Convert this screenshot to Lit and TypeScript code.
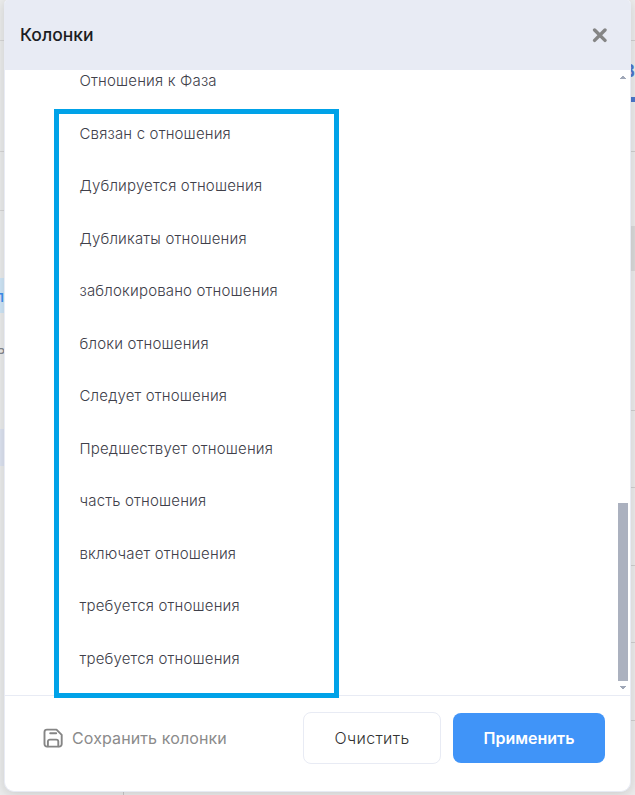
import { LitElement, html, css, svg } from "lit";
import { customElement } from "lit/decorators.js";

const COLUMNS = [
  "Связан с отношения",
  "Дублируется отношения",
  "Дубликаты отношения",
  "заблокировано отношения",
  "блоки отношения",
  "Следует отношения",
  "Предшествует отношения",
  "часть отношения",
  "включает отношения",
  "требуется отношения",
  "требуется отношения",
];

const LEFT_LINES = [40, 151, 210];
const RIGHT_LINES = [40, 151, 410, 487, 565, 642, 720];

/** The dimmed page that shows around the dialog. */
@customElement("page-backdrop")
export class PageBackdrop extends LitElement {
  static styles = css`
    :host {
      position: absolute;
      inset: 0;
      overflow: hidden;
      background: #ececec;
      font-family: Inter, sans-serif;
    }
    svg { display: block; }
    text { font-size: 15px; }
  `;
  render() {
    return html`<svg width="635" height="795" viewBox="0 0 635 795">
      <rect width="124" height="795" fill="#ebecec" />
      <rect x="123" y="790" width="1" height="5" fill="#c8c8c8" />
      ${LEFT_LINES.map((y) => svg`<rect y=${y} width="5" height="1" fill="#d6d6d6" />`)}
      ${RIGHT_LINES.map((y) => svg`<rect x="625" y=${y} width="10" height="1" fill="#cfcfcf" />`)}
      <rect y="278" width="5" height="35" fill="#cfe6f7" />
      <rect y="429" width="5" height="37" fill="#dde3f1" />
      <rect x="625" y="226" width="10" height="45" fill="#dadada" />
      <rect x="625" y="97" width="10" height="5" fill="#4c78cc" />
      <text x="4" y="302" text-anchor="end" fill="#3e8ef0" font-weight="500">л</text>
      <text x="5.2" y="354" text-anchor="end" fill="#85888f">ь</text>
      <text class="tab" x="634.8" y="77" text-anchor="end" fill="#4c78cc" font-weight="700" style="font-size:17px">В</text>
    </svg>`;
  }
}

@customElement("app-root")
export class AppRoot extends LitElement {
  static styles = css`
    :host {
      display: block;
      position: relative;
      width: 635px;
      height: 795px;
      overflow: hidden;
      font-family: Inter, "Noto Sans", sans-serif;
    }
    .dialog {
      position: relative;
      box-sizing: border-box;
      width: 627px;
      height: 792px;
      margin-left: 4px;
      display: flex;
      flex-direction: column;
      background: #fff;
      border: 1px solid #e8ebf4;
      border-top: 0;
      border-radius: 4px 4px 10px 10px;
      box-shadow: 0 2px 12px rgba(0, 0, 0, 0.14);
      overflow: hidden;
    }
    .header {
      flex: none;
      box-sizing: border-box;
      height: 70px;
      padding: 0 23px 0 15px;
      display: flex;
      align-items: center;
      justify-content: space-between;
      background: #e8ebf4;
    }
    h1 {
      margin: 0;
      font-size: 17.5px;
      line-height: 24px;
      font-weight: 500;
      color: #1b1d22;
    }
    .header svg, .save svg { display: block; flex: none; }
    .body {
      flex: none;
      box-sizing: border-box;
      height: 625px;
      display: flex;
      justify-content: space-between;
      overflow: hidden;
    }
    ul {
      margin: -15px 0 0 74.5px;
      padding: 0;
      list-style: none;
    }
    li {
      height: 52.5px;
      line-height: 52.5px;
      font-size: 15px;
      font-weight: 300;
      letter-spacing: 0.17px;
      color: #40404a;
      white-space: nowrap;
    }
    .scrollbar {
      width: 10px;
      margin-right: 2px;
      padding: 6px 0 5px;
      display: flex;
      flex-direction: column;
      align-items: center;
    }
    .thumb {
      width: 10px;
      height: 178px;
      margin: auto 0 5px;
      background: #abb1bf;
    }
    .scrollbar svg { display: block; }
    .scrollbar .down { margin-bottom: 1px; }
    .footer {
      flex: 1;
      display: flex;
      align-items: flex-start;
      border-top: 1px solid #e8ebf4;
      padding: 16px 25px 0 38px;
    }
    .save {
      display: flex;
      align-items: center;
      gap: 9px;
      height: 52px;
      margin-right: auto;
      color: #8b8b8b;
      font-size: 16px;
      letter-spacing: 0.11px;
      white-space: nowrap;
    }
    button {
      box-sizing: border-box;
      padding: 0;
      font: 400 16px/20px Inter, sans-serif;
      border-radius: 8px;
    }
    .clear {
      width: 138px;
      height: 52px;
      border: 1px solid #e8ebf4;
      background: #fff;
      color: #333;
      font-weight: 300;
      letter-spacing: 0.35px;
    }
    .apply {
      width: 152px;
      height: 50px;
      margin: 1px 0 0 12px;
      border: 0;
      background: #4094f8;
      color: #fff;
      font-weight: 600;
    }
    .marker {
      position: absolute;
      left: 54px;
      top: 109px;
      box-sizing: border-box;
      width: 285px;
      height: 589px;
      border: 5px solid #00a2e8;
      pointer-events: none;
    }
  `;

  render() {
    return html`
      <page-backdrop></page-backdrop>
      <div class="dialog">
        <div class="header">
          <h1>Колонки</h1>
          <svg width="15" height="15" viewBox="0 0 15 15">
            <path d="M2.6 2 13 12.4M13 2 2.6 12.4" stroke="#858585" stroke-width="3.4" stroke-linecap="round" />
          </svg>
        </div>
        <div class="body">
          <ul>
            <li>Отношения к Фаза</li>
            ${COLUMNS.map((name) => html`<li>${name}</li>`)}
          </ul>
          <div class="scrollbar">
            <svg width="6" height="3" viewBox="0 0 6 3" shape-rendering="crispEdges"><path d="M2 0h2v1h1v1h1v1H0V2h1V1h1Z" fill="#a0a8b8" /></svg>
            <div class="thumb"></div>
            <svg class="down" width="6" height="3" viewBox="0 0 6 3" shape-rendering="crispEdges"><path d="M0 0h6v1H5v1H4v1H2V2H1V1H0Z" fill="#a0a8b8" /></svg>
          </div>
        </div>
        <div class="footer">
          <div class="save">
            <svg width="20" height="20" viewBox="0 0 20 20" fill="none" stroke="#858585" stroke-width="1.9" stroke-linecap="round" stroke-linejoin="round">
              <path d="M4 1.6h9.5l5.2 5.2V16a2.5 2.5 0 0 1-2.5 2.6H4A2.5 2.5 0 0 1 1.5 16V4A2.5 2.5 0 0 1 4 1.6Z" />
              <path d="M4.9 18.2v-4.6a2 2 0 0 1 2-2h6.4a2 2 0 0 1 2 2v4.6M7.2 5.3h6" />
            </svg>
            <span>Сохранить колонки</span>
          </div>
          <button class="clear">Очистить</button>
          <button class="apply">Применить</button>
        </div>
      </div>
      <div class="marker"></div>
    `;
  }
}
